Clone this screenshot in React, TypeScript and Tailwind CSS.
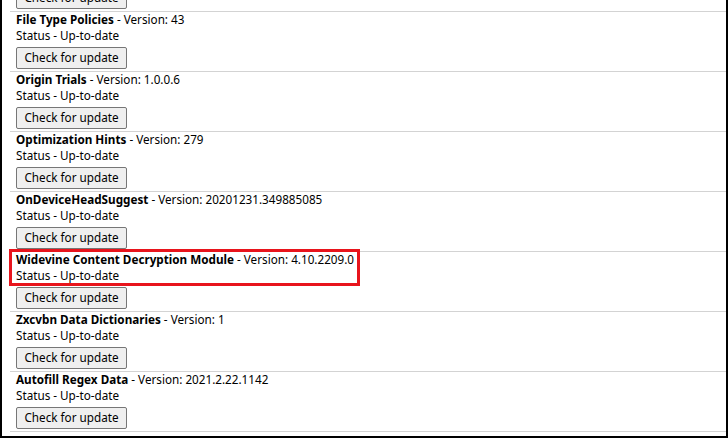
import React from "react";

const rows = [
  { name: "Certificate Error Assistant", version: "7" },
  { name: "File Type Policies", version: "43" },
  { name: "Origin Trials", version: "1.0.0.6" },
  { name: "Optimization Hints", version: "279" },
  { name: "OnDeviceHeadSuggest", version: "20201231.349885085" },
  { name: "Widevine Content Decryption Module", version: "4.10.2209.0", highlight: true },
  { name: "Zxcvbn Data Dictionaries", version: "1" },
  { name: "Autofill Regex Data", version: "2021.2.22.1142" },
];

export default function App() {
  return (
    <div
      className="w-[728px] h-[438px] overflow-hidden bg-white border-l-2 border-r-2 border-b-2 border-black text-black"
      style={{ fontFamily: '"Noto Sans", "Open Sans", sans-serif' }}
    >
      <div className="ml-[8px] mt-[-49px]">
        {rows.map((r) => (
          <div key={r.name} className="relative border-t border-[#d3d3d3] pl-[6px] pb-[2px]">
            {r.highlight && (
              <div className="absolute left-[-1px] top-[-3px] w-[351px] h-[37px] border-[3px] border-[#e8141c] pointer-events-none" />
            )}
            <div className="text-[11.7px] leading-[15px] whitespace-nowrap">
              <span className="font-bold">{r.name}</span>
              <span> - Version: {r.version}</span>
            </div>
            <div className="text-[11.7px] leading-[16px]">Status - Up-to-date</div>
            <button className="mt-[4px] h-[22px] w-[111px] flex items-center justify-center bg-[#efefef] border border-[#767676] rounded-[2px] text-[11.7px] leading-none text-black">
              Check for update
            </button>
          </div>
        ))}
        <div className="border-t border-[#d3d3d3] h-[20px]" />
      </div>
    </div>
  );
}
